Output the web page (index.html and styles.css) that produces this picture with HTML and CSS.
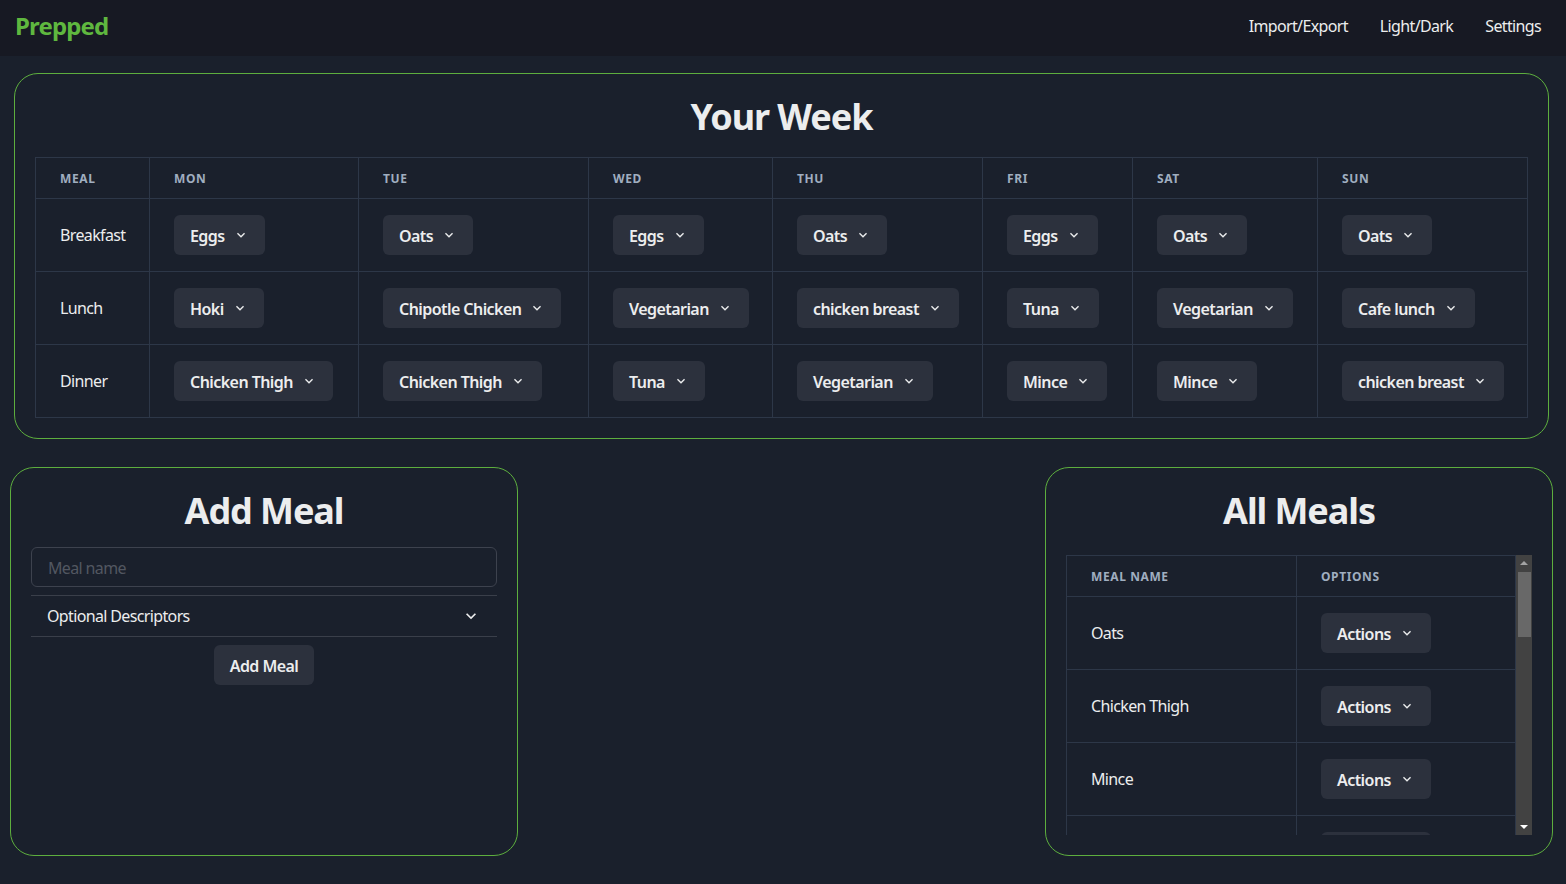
FILE: index.html
```html
<!DOCTYPE html>
<html lang="en">
<head>
<meta charset="utf-8">
<title>Prepped</title>
<link rel="stylesheet" href="styles.css">
</head>
<body>
<header class="topbar">
  <div class="brand">Prepped</div>
  <nav class="nav">
    <a class="nav-link">Import/Export</a>
    <a class="nav-link">Light/Dark</a>
    <a class="nav-link">Settings</a>
  </nav>
</header>

<main class="main">
  <section class="card week-card">
    <h2 class="card-title">Your Week</h2>
    <table class="grid week-table">
      <colgroup>
        <col class="c-meal"><col class="c-mon"><col class="c-tue"><col class="c-wed"><col class="c-thu"><col class="c-fri"><col class="c-sat"><col class="c-sun">
      </colgroup>
      <thead>
        <tr><th>Meal</th><th>Mon</th><th>Tue</th><th>Wed</th><th>Thu</th><th>Fri</th><th>Sat</th><th>Sun</th></tr>
      </thead>
      <tbody>
        <tr>
          <td>Breakfast</td>
          <td><button class="menu-btn">Eggs<svg class="chev" viewBox="0 0 24 24"><path d="M16.59 8.59L12 13.17 7.41 8.59 6 10l6 6 6-6z"/></svg></button></td>
          <td><button class="menu-btn">Oats<svg class="chev" viewBox="0 0 24 24"><path d="M16.59 8.59L12 13.17 7.41 8.59 6 10l6 6 6-6z"/></svg></button></td>
          <td><button class="menu-btn">Eggs<svg class="chev" viewBox="0 0 24 24"><path d="M16.59 8.59L12 13.17 7.41 8.59 6 10l6 6 6-6z"/></svg></button></td>
          <td><button class="menu-btn">Oats<svg class="chev" viewBox="0 0 24 24"><path d="M16.59 8.59L12 13.17 7.41 8.59 6 10l6 6 6-6z"/></svg></button></td>
          <td><button class="menu-btn">Eggs<svg class="chev" viewBox="0 0 24 24"><path d="M16.59 8.59L12 13.17 7.41 8.59 6 10l6 6 6-6z"/></svg></button></td>
          <td><button class="menu-btn">Oats<svg class="chev" viewBox="0 0 24 24"><path d="M16.59 8.59L12 13.17 7.41 8.59 6 10l6 6 6-6z"/></svg></button></td>
          <td><button class="menu-btn">Oats<svg class="chev" viewBox="0 0 24 24"><path d="M16.59 8.59L12 13.17 7.41 8.59 6 10l6 6 6-6z"/></svg></button></td>
        </tr>
        <tr>
          <td>Lunch</td>
          <td><button class="menu-btn">Hoki<svg class="chev" viewBox="0 0 24 24"><path d="M16.59 8.59L12 13.17 7.41 8.59 6 10l6 6 6-6z"/></svg></button></td>
          <td><button class="menu-btn">Chipotle Chicken<svg class="chev" viewBox="0 0 24 24"><path d="M16.59 8.59L12 13.17 7.41 8.59 6 10l6 6 6-6z"/></svg></button></td>
          <td><button class="menu-btn">Vegetarian<svg class="chev" viewBox="0 0 24 24"><path d="M16.59 8.59L12 13.17 7.41 8.59 6 10l6 6 6-6z"/></svg></button></td>
          <td><button class="menu-btn">chicken breast<svg class="chev" viewBox="0 0 24 24"><path d="M16.59 8.59L12 13.17 7.41 8.59 6 10l6 6 6-6z"/></svg></button></td>
          <td><button class="menu-btn">Tuna<svg class="chev" viewBox="0 0 24 24"><path d="M16.59 8.59L12 13.17 7.41 8.59 6 10l6 6 6-6z"/></svg></button></td>
          <td><button class="menu-btn">Vegetarian<svg class="chev" viewBox="0 0 24 24"><path d="M16.59 8.59L12 13.17 7.41 8.59 6 10l6 6 6-6z"/></svg></button></td>
          <td><button class="menu-btn">Cafe lunch<svg class="chev" viewBox="0 0 24 24"><path d="M16.59 8.59L12 13.17 7.41 8.59 6 10l6 6 6-6z"/></svg></button></td>
        </tr>
        <tr>
          <td>Dinner</td>
          <td><button class="menu-btn">Chicken Thigh<svg class="chev" viewBox="0 0 24 24"><path d="M16.59 8.59L12 13.17 7.41 8.59 6 10l6 6 6-6z"/></svg></button></td>
          <td><button class="menu-btn">Chicken Thigh<svg class="chev" viewBox="0 0 24 24"><path d="M16.59 8.59L12 13.17 7.41 8.59 6 10l6 6 6-6z"/></svg></button></td>
          <td><button class="menu-btn">Tuna<svg class="chev" viewBox="0 0 24 24"><path d="M16.59 8.59L12 13.17 7.41 8.59 6 10l6 6 6-6z"/></svg></button></td>
          <td><button class="menu-btn">Vegetarian<svg class="chev" viewBox="0 0 24 24"><path d="M16.59 8.59L12 13.17 7.41 8.59 6 10l6 6 6-6z"/></svg></button></td>
          <td><button class="menu-btn">Mince<svg class="chev" viewBox="0 0 24 24"><path d="M16.59 8.59L12 13.17 7.41 8.59 6 10l6 6 6-6z"/></svg></button></td>
          <td><button class="menu-btn">Mince<svg class="chev" viewBox="0 0 24 24"><path d="M16.59 8.59L12 13.17 7.41 8.59 6 10l6 6 6-6z"/></svg></button></td>
          <td><button class="menu-btn">chicken breast<svg class="chev" viewBox="0 0 24 24"><path d="M16.59 8.59L12 13.17 7.41 8.59 6 10l6 6 6-6z"/></svg></button></td>
        </tr>
      </tbody>
    </table>
  </section>

  <div class="lower">
    <section class="card side-card">
      <h2 class="card-title">Add Meal</h2>
      <input class="text-input" type="text" placeholder="Meal name">
      <div class="accordion">
        <button class="acc-btn"><span>Optional Descriptors</span><svg class="acc-chev" viewBox="0 0 24 24"><path d="M16.59 8.59L12 13.17 7.41 8.59 6 10l6 6 6-6z"/></svg></button>
      </div>
      <div class="center-row"><button class="plain-btn">Add Meal</button></div>
    </section>

    <section class="card side-card">
      <h2 class="card-title spaced">All Meals</h2>
      <div class="scroll-box">
        <div class="scroll-view">
          <table class="grid meals-table">
            <colgroup><col class="c-name"><col class="c-opt"></colgroup>
            <thead><tr><th>Meal Name</th><th>Options</th></tr></thead>
            <tbody>
              <tr><td>Oats</td><td><button class="menu-btn">Actions<svg class="chev" viewBox="0 0 24 24"><path d="M16.59 8.59L12 13.17 7.41 8.59 6 10l6 6 6-6z"/></svg></button></td></tr>
              <tr><td>Chicken Thigh</td><td><button class="menu-btn">Actions<svg class="chev" viewBox="0 0 24 24"><path d="M16.59 8.59L12 13.17 7.41 8.59 6 10l6 6 6-6z"/></svg></button></td></tr>
              <tr><td>Mince</td><td><button class="menu-btn">Actions<svg class="chev" viewBox="0 0 24 24"><path d="M16.59 8.59L12 13.17 7.41 8.59 6 10l6 6 6-6z"/></svg></button></td></tr>
              <tr><td>Eggs</td><td><button class="menu-btn">Actions<svg class="chev" viewBox="0 0 24 24"><path d="M16.59 8.59L12 13.17 7.41 8.59 6 10l6 6 6-6z"/></svg></button></td></tr>
            </tbody>
          </table>
        </div>
        <div class="vscroll" aria-hidden="true">
          <div class="vs-btn"><span class="tri-up"></span></div>
          <div class="vs-track"><div class="vs-thumb"></div></div>
          <div class="vs-btn"><span class="tri-down"></span></div>
        </div>
      </div>
    </section>
  </div>
</main>
</body>
</html>
```
FILE: styles.css
```css
* { box-sizing: border-box; }

html, body {
  margin: 0;
  padding: 0;
  height: 100%;
}

body {
  background: #1a202c;
  color: #ecedee;
  font-family: "Noto Sans", "Open Sans", sans-serif;
  font-size: 16px;
  line-height: 1.5;
  letter-spacing: -0.04em;
  overflow: hidden;
}

.topbar {
  height: 56px;
  background: #171923;
  display: flex;
  align-items: center;
  justify-content: space-between;
  padding: 0 25px 0 15px;
}

.brand {
  color: #5fb73f;
  font-weight: 700;
  font-size: 24px;
  line-height: 1;
  letter-spacing: -0.036em;
  margin-top: -4px;
}

.nav {
  display: flex;
  gap: 32px;
  margin-top: -4px;
}

.nav-link {
  color: #ecedee;
  font-size: 16px;
  cursor: pointer;
}

.main {
  padding-top: 17px;
}

.card {
  border: 1px solid #5dae3e;
  border-radius: 24px;
  padding: 20px;
}

.week-card {
  margin: 0 17px 0 14px;
}

.card-title {
  margin: 0 0 20px;
  text-align: center;
  font-size: 36px;
  font-weight: 700;
  line-height: 1.2;
  letter-spacing: -0.03em;
  color: #ecedee;
  position: relative;
  top: 1px;
}

.side-card .card-title {
  margin-bottom: 16px;
}

.side-card .card-title.spaced {
  margin-bottom: 24px;
}

.grid {
  width: 100%;
  border-collapse: collapse;
  table-layout: fixed;
}

.grid th,
.grid td {
  border: 1px solid #2d3748;
  text-align: left;
  vertical-align: middle;
}

.grid th {
  padding: 13px 24px 11px;
  font-size: 12px;
  line-height: 16px;
  font-weight: 700;
  letter-spacing: 0.05em;
  text-transform: uppercase;
  color: #a0aec0;
}

.grid td {
  padding: 16px 24px;
  height: 73px;
  font-size: 16px;
  line-height: 24px;
  color: #ecedee;
}

.c-meal { width: 114px; }
.c-mon { width: 209px; }
.c-tue { width: 230px; }
.c-wed { width: 184px; }
.c-thu { width: 210px; }
.c-fri { width: 150px; }
.c-sat { width: 185px; }
.c-sun { width: 210px; }

.c-name { width: 230px; }

.menu-btn,
.plain-btn {
  display: inline-flex;
  align-items: center;
  height: 40px;
  padding: 2px 16px 0;
  border: none;
  border-radius: 6px;
  background: #2c313d;
  color: #ecedee;
  font-family: inherit;
  font-size: 16px;
  font-weight: 600;
  letter-spacing: -0.035em;
  white-space: nowrap;
  cursor: pointer;
}

.chev {
  width: 16px;
  height: 16px;
  margin-left: 8px;
  margin-top: -2px;
  fill: currentColor;
  flex: none;
}

.lower {
  display: flex;
  justify-content: space-between;
  padding: 0 13px 0 10px;
  margin-top: 28px;
}

.side-card {
  width: 508px;
  height: 389px;
  display: flex;
  flex-direction: column;
  padding-bottom: 20px;
}

.text-input {
  height: 40px;
  width: 100%;
  border: 1px solid #3d424e;
  border-radius: 6px;
  background: transparent;
  padding: 2px 16px 0;
  color: #ecedee;
  font-family: inherit;
  font-size: 16px;
  letter-spacing: -0.04em;
  outline: none;
}

.text-input::placeholder {
  color: #525761;
}

.accordion {
  margin-top: 8px;
  border-top: 1px solid #3a3f4a;
  border-bottom: 1px solid #3a3f4a;
}

.acc-btn {
  width: 100%;
  height: 40px;
  display: flex;
  align-items: center;
  justify-content: space-between;
  padding: 0 16px;
  background: transparent;
  border: none;
  color: #ecedee;
  font-family: inherit;
  font-size: 16px;
  letter-spacing: -0.04em;
  cursor: pointer;
}

.acc-chev {
  width: 20px;
  height: 20px;
  fill: currentColor;
}

.center-row {
  display: flex;
  justify-content: center;
  margin-top: 8px;
}

.scroll-box {
  flex: 1;
  min-height: 0;
  display: flex;
}

.scroll-view {
  flex: 1;
  min-width: 0;
  overflow: hidden;
}

.vscroll {
  width: 16px;
  flex: none;
  background: #424242;
  display: flex;
  flex-direction: column;
}

.vs-btn {
  height: 16px;
  flex: none;
  display: flex;
  align-items: center;
  justify-content: center;
}

.tri-up {
  width: 0;
  height: 0;
  border-left: 4px solid transparent;
  border-right: 4px solid transparent;
  border-bottom: 4px solid #a3a3a3;
}

.tri-down {
  width: 0;
  height: 0;
  border-left: 4px solid transparent;
  border-right: 4px solid transparent;
  border-top: 4px solid #ffffff;
}

.vs-track {
  flex: 1;
  padding: 1px 1px 0 2px;
}

.vs-thumb {
  height: 65px;
  background: #686868;
}
```
